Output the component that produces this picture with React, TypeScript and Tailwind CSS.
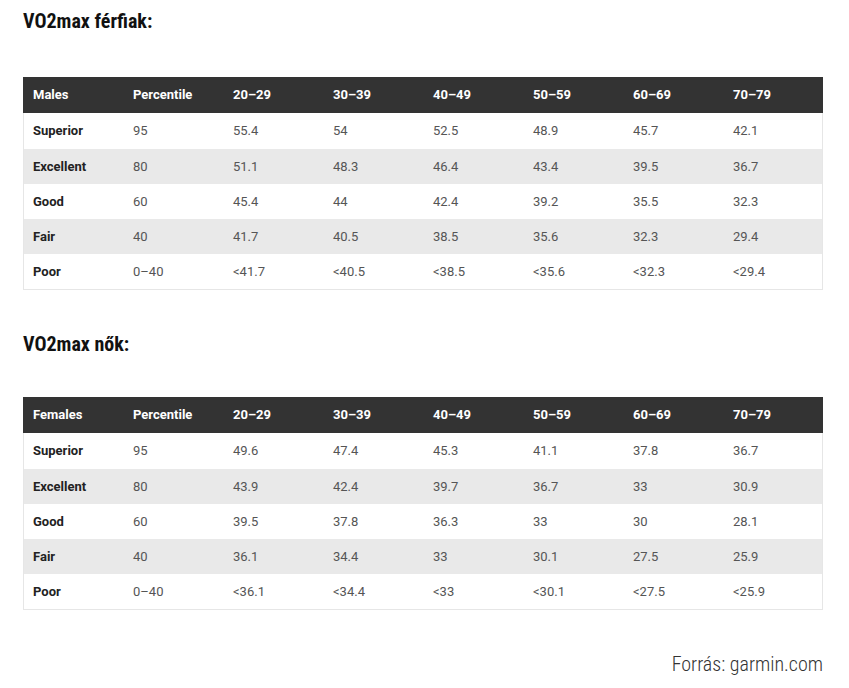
import React from "react";

type Row = { label: string; pct: string; values: string[] };

const ages = ["20–29", "30–39", "40–49", "50–59", "60–69", "70–79"];

const males: Row[] = [
  { label: "Superior", pct: "95", values: ["55.4", "54", "52.5", "48.9", "45.7", "42.1"] },
  { label: "Excellent", pct: "80", values: ["51.1", "48.3", "46.4", "43.4", "39.5", "36.7"] },
  { label: "Good", pct: "60", values: ["45.4", "44", "42.4", "39.2", "35.5", "32.3"] },
  { label: "Fair", pct: "40", values: ["41.7", "40.5", "38.5", "35.6", "32.3", "29.4"] },
  { label: "Poor", pct: "0–40", values: ["<41.7", "<40.5", "<38.5", "<35.6", "<32.3", "<29.4"] },
];

const females: Row[] = [
  { label: "Superior", pct: "95", values: ["49.6", "47.4", "45.3", "41.1", "37.8", "36.7"] },
  { label: "Excellent", pct: "80", values: ["43.9", "42.4", "39.7", "36.7", "33", "30.9"] },
  { label: "Good", pct: "60", values: ["39.5", "37.8", "36.3", "33", "30", "28.1"] },
  { label: "Fair", pct: "40", values: ["36.1", "34.4", "33", "30.1", "27.5", "25.9"] },
  { label: "Poor", pct: "0–40", values: ["<36.1", "<34.4", "<33", "<30.1", "<27.5", "<25.9"] },
];

function VO2Table({ first, rows }: { first: string; rows: Row[] }) {
  return (
    <div className="w-[800px] text-[13px]">
      <div className="grid h-[36px] grid-cols-8 items-center bg-[#333333] font-bold text-white">
        {[first, "Percentile", ...ages].map((h) => (
          <div key={h} className="pl-[10px]">{h}</div>
        ))}
      </div>
      <div className="border border-t-0 border-[#e6e6e6]">
        {rows.map((r, i) => (
          <div
            key={r.label}
            className={`grid grid-cols-[99px_repeat(6,100px)_99px] items-center ${i === 0 ? "h-[36px]" : "h-[35px]"} ${i % 2 === 1 ? "bg-[#e9e9e9]" : "bg-white"}`}
          >
            <div className="pl-[9px] font-bold text-[#222]">{r.label}</div>
            <div className="pl-[10px] text-[#555]">{r.pct}</div>
            {r.values.map((v, j) => (
              <div key={j} className="pl-[10px] text-[#555]">{v}</div>
            ))}
          </div>
        ))}
      </div>
    </div>
  );
}

export default function App() {
  return (
    <div className="min-h-[688px] w-[849px] bg-white pl-[23px] font-['Roboto',sans-serif]">
      <h2 className="pt-[9px] font-['Roboto_Condensed','Roboto',sans-serif] text-[20px] leading-[24px] font-bold text-[#111]">
        VO2max férfiak:
      </h2>
      <div className="mt-[44px]">
        <VO2Table first="Males" rows={males} />
      </div>
      <h2 className="mt-[42px] font-['Roboto_Condensed','Roboto',sans-serif] text-[20px] leading-[24px] font-bold text-[#111]">
        VO2max nők:
      </h2>
      <div className="mt-[41px]">
        <VO2Table first="Females" rows={females} />
      </div>
      <p className="mt-[42px] w-[800px] text-right font-['Roboto_Condensed','Roboto',sans-serif] text-[20px] leading-[24px] font-light text-[#333]">
        Forrás: garmin.com
      </p>
    </div>
  );
}
